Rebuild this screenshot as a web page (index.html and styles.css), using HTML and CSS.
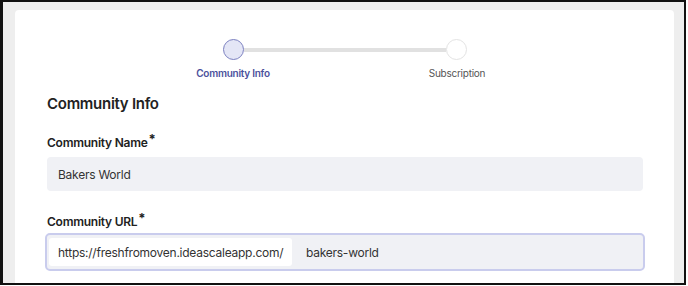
FILE: index.html
```html
<!DOCTYPE html>
<html lang="en">
<head>
<meta charset="utf-8">
<title>Community Info</title>
<link rel="stylesheet" href="styles.css">
</head>
<body>
<div class="frame">
  <div class="card">
    <div class="stepper">
      <div class="track">
        <span class="dot dot-active"></span>
        <span class="bar"></span>
        <span class="dot"></span>
      </div>
      <div class="step-labels">
        <span class="step-label step-label-active">Community Info</span>
        <span class="step-label">Subscription</span>
      </div>
    </div>
    <h2 class="section-title">Community Info</h2>
    <div class="field">
      <label class="field-label">Community Name<span class="req">*</span></label>
      <div class="input">Bakers World</div>
    </div>
    <div class="field field-url">
      <label class="field-label">Community URL<span class="req">*</span></label>
      <div class="input input-group">
        <span class="prefix">https://freshfromoven.ideascaleapp.com/</span>
        <span class="slug">bakers-world</span>
      </div>
    </div>
  </div>
</div>
</body>
</html>
```
FILE: styles.css
```css
* { box-sizing: border-box; }
html, body { margin: 0; padding: 0; background: #ffffff; }
body {
  font-family: Inter, "Noto Sans", "Liberation Sans", sans-serif;
  color: #222222;
}
.frame {
  width: 686px;
  height: 285px;
  border: 2px solid #111111;
  border-left-width: 3px;
  background: #eeeeee;
  padding: 8px 10px 0 12px;
  overflow: hidden;
}
.card {
  background: #ffffff;
  height: 100%;
  border-radius: 4px 4px 0 0;
  padding: 29px 31px 0 32px;
}
.stepper {
  display: flex;
  flex-direction: column;
  align-items: center;
}
.track {
  display: flex;
  align-items: center;
  width: 244px;
}
.dot {
  width: 21px;
  height: 21px;
  border-radius: 50%;
  border: 1.5px solid #e3e3e3;
  background: #ffffff;
  flex: none;
}
.dot-active {
  background: #e4e6f6;
  border-color: #7b80c0;
}
.bar {
  flex: 1;
  height: 4px;
  background: #e1e1e1;
}
.step-labels {
  display: flex;
  margin-top: 6px;
}
.step-label {
  width: 224px;
  text-align: center;
  font-size: 10px;
  letter-spacing: -0.25px;
  line-height: 14px;
  color: #555555;
}
.step-label-active {
  color: #4b519c;
  font-weight: 600;
}
.section-title {
  margin: 14px 0 0;
  font-size: 15px;
  letter-spacing: -0.28px;
  line-height: 20px;
  font-weight: 600;
  color: #222222;
}
.field { margin-top: 20px; }
.field-url { margin-top: 22px; }
.field-label {
  display: block;
  font-size: 12px;
  letter-spacing: -0.25px;
  line-height: 17px;
  font-weight: 600;
  color: #222222;
}
.req {
  font-size: 13px;
  font-weight: 700;
  position: relative;
  top: -3px;
  margin-left: 1px;
}
.input {
  margin-top: 6px;
  height: 34px;
  background: #f0f1f5;
  border-radius: 4px;
  padding: 0 11px;
  display: flex;
  align-items: center;
  font-size: 12px;
  letter-spacing: -0.25px;
  color: #333333;
}
.input-group {
  margin: 3px -2px 0;
  height: 38px;
  border: 2px solid #c9cced;
  border-radius: 5px;
  padding: 3px 2px;
  align-items: stretch;
}
.prefix {
  display: flex;
  align-items: center;
  background: #ffffff;
  border-radius: 3px;
  padding: 0 9px;
  width: 243px;
}
.slug {
  display: flex;
  align-items: center;
  padding-left: 14px;
}
```
